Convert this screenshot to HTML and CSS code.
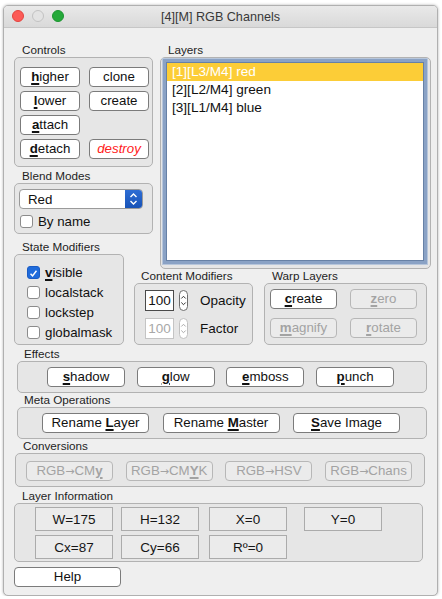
FILE: index.html
```html
<!DOCTYPE html>
<html>
<head>
<meta charset="utf-8">
<link rel="stylesheet" href="styles.css">
</head>
<body>
<div class="window">
  <div class="titlebar">
    <div class="lights">
      <span class="light l-red"></span>
      <span class="light l-grey"></span>
      <span class="light l-green"></span>
    </div>
    <div class="title">[4][M] RGB Channels</div>
  </div>
  <div class="content">
    <div class="top">
      <div class="col-left">
        <div class="glabel">Controls</div>
        <div class="gbox controls">
          <div class="btn"><u>h</u>igher</div>
          <div class="btn">clone</div>
          <div class="btn"><u>l</u>ower</div>
          <div class="btn">create</div>
          <div class="btn"><u>a</u>ttach</div>
          <div class="spacer"></div>
          <div class="btn"><u>d</u>etach</div>
          <div class="btn destroy">destroy</div>
        </div>

        <div class="glabel mt2">Blend Modes</div>
        <div class="gbox blend">
          <div class="select">
            <span class="select-text">Red</span>
            <span class="select-arrows">
              <svg width="17" height="20" viewBox="0 0 17 20"><path d="M5.5 8 L8.5 5 L11.5 8" fill="none" stroke="#fff" stroke-width="1.4"/><path d="M5.5 12 L8.5 15 L11.5 12" fill="none" stroke="#fff" stroke-width="1.4"/></svg>
            </span>
          </div>
          <div class="check-row"><span class="cbox"></span><span>By name</span></div>
        </div>

        <div class="glabel mt6">State Modifiers</div>
        <div class="gbox state">
          <div class="check-row"><span class="cbox checked"><svg width="13" height="13" viewBox="0 0 13 13"><path d="M3 6.8 L5.4 9.4 L10 3.2" fill="none" stroke="#fff" stroke-width="1.7"/></svg></span><span><u>v</u>isible</span></div>
          <div class="check-row"><span class="cbox"></span><span>localstack</span></div>
          <div class="check-row"><span class="cbox"></span><span>lockstep</span></div>
          <div class="check-row"><span class="cbox"></span><span>globalmask</span></div>
        </div>
      </div>

      <div class="col-right">
        <div class="glabel">Layers</div>
        <div class="gbox layers">
          <div class="list">
            <div class="item selected">[1][L3/M4] red</div>
            <div class="item">[2][L2/M4] green</div>
            <div class="item">[3][L1/M4] blue</div>
          </div>
        </div>
        <div class="modrow">
          <div class="group-content">
            <div class="glabel lp7">Content Modifiers</div>
            <div class="gbox contentmods">
              <div class="spin-row">
                <span class="field">100</span>
                <span class="stepper"><svg width="9" height="21" viewBox="0 0 9 21"><path d="M2.3 8.5 L4.5 6.3 L6.7 8.5" fill="none" stroke="#333" stroke-width="1"/><path d="M2.3 12.5 L4.5 14.7 L6.7 12.5" fill="none" stroke="#333" stroke-width="1"/></svg></span>
                <span class="spin-label">Opacity</span>
              </div>
              <div class="spin-row disabled">
                <span class="field">100</span>
                <span class="stepper"><svg width="9" height="21" viewBox="0 0 9 21"><path d="M2.3 8.5 L4.5 6.3 L6.7 8.5" fill="none" stroke="#aaa" stroke-width="1"/><path d="M2.3 12.5 L4.5 14.7 L6.7 12.5" fill="none" stroke="#aaa" stroke-width="1"/></svg></span>
                <span class="spin-label">Factor</span>
              </div>
            </div>
          </div>
          <div class="group-warp">
            <div class="glabel">Warp Layers</div>
            <div class="gbox warp">
              <div class="btn"><u>c</u>reate</div>
              <div class="btn disabled"><u>z</u>ero</div>
              <div class="btn disabled"><u>m</u>agnify</div>
              <div class="btn disabled"><u>r</u>otate</div>
            </div>
          </div>
        </div>
      </div>
    </div>

    <div class="glabel mt2 lp10">Effects</div>
    <div class="gbox effects">
      <div class="btn w78"><u>s</u>hadow</div>
      <div class="btn w78"><u>g</u>low</div>
      <div class="btn w78"><u>e</u>mboss</div>
      <div class="btn w78"><u>p</u>unch</div>
    </div>

    <div class="glabel lp10">Meta Operations</div>
    <div class="gbox meta">
      <div class="btn w107">Rename <u>L</u>ayer</div>
      <div class="btn w117">Rename <u>M</u>aster</div>
      <div class="btn w107"><u>S</u>ave Image</div>
    </div>

    <div class="glabel lp9">Conversions</div>
    <div class="gbox conversions">
      <div class="btn disabled w87">RGB<span class="arr">→</span>CM<u>y</u></div>
      <div class="btn disabled w87">RGB<span class="arr">→</span>CM<u>Y</u>K</div>
      <div class="btn disabled w87">RGB<span class="arr">→</span>HSV</div>
      <div class="btn disabled w87">RGB<span class="arr">→</span>Chans</div>
    </div>

    <div class="glabel mt2">Layer Information</div>
    <div class="gbox info">
      <div class="cell">W=175</div>
      <div class="cell">H=132</div>
      <div class="cell">X=0</div>
      <div class="cell">Y=0</div>
      <div class="cell">Cx=87</div>
      <div class="cell">Cy=66</div>
      <div class="cell">Rº=0</div>
    </div>

    <div class="btn help">Help</div>
  </div>
</div>
</body>
</html>
```

FILE: styles.css
```css
html, body {
  margin: 0;
  padding: 0;
  background: #ffffff;
}

body {
  font-family: "Liberation Sans", Arial, sans-serif;
  color: #1a1a1a;
}

.window {
  margin: 5px 0 0 3px;
  width: 435px;
  height: 591px;
  box-sizing: border-box;
  border: 1px solid #b0b0b0;
  border-radius: 5px;
  box-shadow: 0 0 3px rgba(0, 0, 0, 0.3);
  background: #efefef;
  overflow: hidden;
}

.titlebar {
  position: relative;
  height: 22px;
  box-sizing: border-box;
  border-bottom: 1px solid #c6c6c6;
  background: linear-gradient(#e9e9e9, #d9d9d9);
  display: flex;
  align-items: center;
  justify-content: center;
}

.lights {
  position: absolute;
  left: 8px;
  top: 4px;
  display: flex;
  gap: 8px;
}

.light {
  width: 12px;
  height: 12px;
  box-sizing: border-box;
  border-radius: 50%;
}

.l-red {
  background: #fc5b57;
  border: 1px solid #e2443f;
}

.l-grey {
  background: #e3e3e3;
  border: 1px solid #c2c2c2;
}

.l-green {
  background: #25a93a;
  border: 1px solid #1c9430;
}

.title {
  font-size: 12.6px;
  color: #383838;
  padding-top: 1px;
}

.content {
  padding: 15px 6px 0 10px;
}

.top {
  display: grid;
  grid-template-columns: 139px 271px;
  column-gap: 7px;
}

.col-left,
.col-right {
  display: flex;
  flex-direction: column;
}

.glabel {
  font-size: 11.7px;
  line-height: 14px;
  height: 14px;
  padding-left: 8px;
  color: #1e1e1e;
  white-space: nowrap;
}

.mt2 { margin-top: 2px; }
.mt6 { margin-top: 6px; }
.lp7 { padding-left: 7px; }
.lp9 { padding-left: 9px; }
.lp10 { padding-left: 10px; }

.gbox {
  box-sizing: border-box;
  border: 1px solid #b2b2b2;
  border-radius: 5px;
  background: #e6e6e6;
}

.btn {
  box-sizing: border-box;
  height: 20px;
  border: 1px solid #7b7b7b;
  border-radius: 4px;
  background: #ffffff;
  font-size: 13.3px;
  line-height: 18px;
  color: #111;
  display: block;
  text-align: center;
  white-space: nowrap;
}

.btn u,
.check-row u {
  font-weight: bold;
  text-decoration: underline;
  text-decoration-thickness: 1.5px;
  text-underline-offset: 2px;
}

.btn.disabled {
  background: #ebebeb;
  border-color: #b7b7b7;
  color: #a3a3a3;
}

.arr {
  font-family: "DejaVu Sans", sans-serif;
  font-size: 11px;
  letter-spacing: -1px;
  margin-right: 1px;
}

.btn.destroy {
  color: #ff2020;
  font-style: italic;
}

/* Controls */
.controls {
  height: 110px;
  padding: 9px 0 0 5px;
  display: grid;
  grid-template-columns: 60px 60px;
  grid-auto-rows: 20px;
  column-gap: 9px;
  row-gap: 4px;
}

/* Blend */
.blend {
  height: 51px;
  padding: 5px 9px 0 4px;
  display: flex;
  flex-direction: column;
  gap: 6px;
}

.select {
  height: 20px;
  box-sizing: border-box;
  border: 1px solid #9a9a9a;
  border-radius: 4px;
  background: #fff;
  display: flex;
  align-items: center;
  overflow: hidden;
}

.select-text {
  flex: 1;
  font-size: 13.3px;
  padding-left: 8px;
  color: #111;
}

.select-arrows {
  width: 17px;
  height: 20px;
  background: linear-gradient(#2f6fd6, #1651b5);
  display: flex;
}

.check-row {
  display: flex;
  align-items: center;
  font-size: 13.3px;
  color: #111;
  height: 13px;
}

.cbox {
  width: 13px;
  height: 13px;
  box-sizing: border-box;
  border: 1px solid #8c8c8c;
  border-radius: 3px;
  background: #fff;
  margin-right: 5px;
  flex: none;
  display: flex;
}

.cbox.checked {
  background: #1f6bdb;
  border-color: #1a5cc4;
}

.blend .cbox {
  margin-left: 1px;
}

/* State */
.state {
  width: 110px;
  height: 91px;
  padding: 7px 0 0 12px;
  display: flex;
  flex-direction: column;
}

.state .check-row {
  height: 20px;
}

/* Layers */
.layers {
  height: 212px;
  padding: 4px 6px 0 5px;
}

.list {
  height: 199px;
  box-sizing: border-box;
  border: 1px solid #6781a6;
  box-shadow: 0 0 0 3px #8aa2c5, 0 0 0 4px #b7c6db;
  background: #fff;
}

.item {
  height: 18px;
  line-height: 18px;
  font-size: 13.6px;
  padding-left: 5px;
  color: #111;
  white-space: nowrap;
}

.item.selected {
  background: #fccd37;
  color: #fff;
}

/* Modifiers row */
.modrow {
  display: flex;
  gap: 11px;
  margin-left: -26px;
}

.group-content {
  width: 119px;
}

.group-warp {
  width: 163px;
}

.contentmods {
  height: 62px;
  padding: 6px 0 0 10px;
  display: flex;
  flex-direction: column;
  gap: 8px;
}

.spin-row {
  display: flex;
  align-items: center;
  height: 20px;
}

.field {
  width: 29px;
  height: 21px;
  box-sizing: border-box;
  border: 1px solid #4a4a4a;
  background: #fff;
  font-size: 13.5px;
  display: flex;
  align-items: center;
  justify-content: center;
  color: #111;
}

.stepper {
  width: 9px;
  height: 21px;
  box-sizing: border-box;
  margin-left: 5px;
  border: 1px solid #6e6e6e;
  border-radius: 5px;
  background: #fff;
  display: flex;
  align-items: center;
  justify-content: center;
  overflow: hidden;
}

.stepper svg {
  flex: none;
}

.spin-label {
  margin-left: 12px;
  font-size: 13.5px;
  color: #111;
}

.spin-row.disabled .field {
  border-color: #c4c4c4;
  color: #a8a8a8;
}

.spin-row.disabled .stepper {
  border-color: #c0c0c0;
}

.warp {
  height: 62px;
  padding: 5px 0 0 5px;
  display: grid;
  grid-template-columns: 67px 67px;
  grid-auto-rows: 20px;
  column-gap: 13px;
  row-gap: 9px;
}

/* Effects */
.w78 { width: 78px; }
.w107 { width: 107px; }
.w117 { width: 117px; }
.w87 { width: 87px; }

.effects {
  height: 32px;
  margin: 0 4px 0 3px;
  padding: 5px 0 0 29px;
  display: flex;
  gap: 11.7px;
}

.meta {
  height: 32px;
  margin: 0 4px 0 3px;
  padding: 5px 0 0 24px;
  display: flex;
  gap: 13.5px;
}

.conversions {
  height: 34px;
  margin: 0 6px 0 1px;
  padding: 7px 0 0 10px;
  display: flex;
  gap: 12.7px;
}

.info {
  height: 59px;
  margin-right: 8px;
  padding: 3px 0 0 20px;
  display: grid;
  grid-template-columns: 86px 88px 95px 78px;
  grid-auto-rows: 24px;
  row-gap: 4px;
}

.cell {
  width: 78px;
  height: 24px;
  box-sizing: border-box;
  border: 1px solid #ababab;
  background: #ebebeb;
  font-size: 13.5px;
  color: #161616;
  display: flex;
  align-items: center;
  justify-content: center;
}

.help {
  width: 107px;
  margin-top: 5px;
}
```
